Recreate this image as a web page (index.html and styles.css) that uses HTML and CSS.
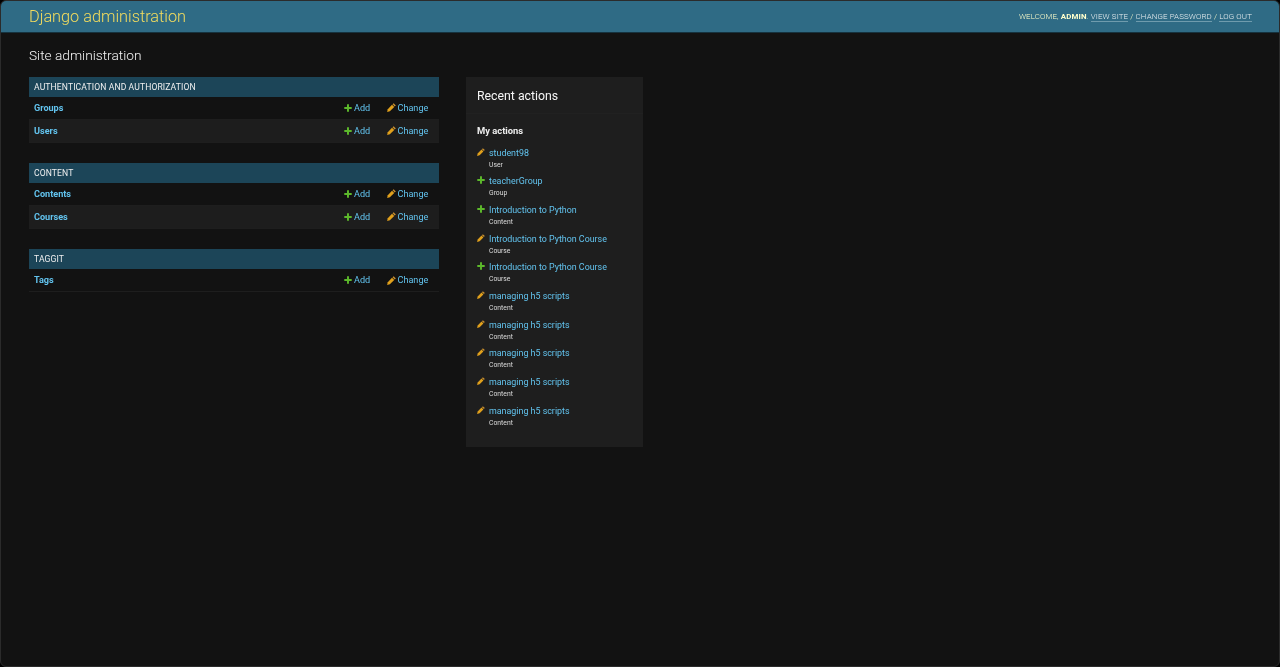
FILE: index.html
```html
<!DOCTYPE html>
<html lang="en">
<head>
<meta charset="utf-8">
<title>Site administration | Django site admin</title>
<link rel="stylesheet" href="styles.css">
</head>
<body>
<svg class="defs" width="0" height="0" aria-hidden="true">
  <symbol id="plus" viewBox="0 0 14 14"><path d="M5.300 0.500h3.400v4.800h4.800v3.400H8.700v4.800H5.300V8.700H0.500V5.300h4.800z" fill="#5cb82b"/></symbol>
  <symbol id="pencil" viewBox="0 0 14 14"><path d="M10.300 0.300l3.400 3.400-1.700 1.700-3.400-3.400z" fill="#c98f2e"/><path d="M7.800 2.800l3.400 3.400-6.700 6.700-4.300 1 1-4.300z" fill="#e0a01c"/></symbol>
</svg>
<div class="frame">
  <header class="topbar">
    <a class="brand" href="#">Django administration</a>
    <div class="tools">Welcome, <strong>admin</strong>. <a href="#">View site</a> / <a href="#">Change password</a> / <a href="#">Log out</a></div>
  </header>
  <main class="content">
    <h1 class="title">Site administration</h1>
    <div class="columns">
      <div class="apps">
        <section class="module">
          <h2 class="caption">Authentication and Authorization</h2>
          <div class="row"><a class="name" href="#">Groups</a><a class="act add" href="#"><svg class="ic"><use href="#plus"/></svg>Add</a><a class="act" href="#"><svg class="ic"><use href="#pencil"/></svg>Change</a></div>
          <div class="row alt"><a class="name" href="#">Users</a><a class="act add" href="#"><svg class="ic"><use href="#plus"/></svg>Add</a><a class="act" href="#"><svg class="ic"><use href="#pencil"/></svg>Change</a></div>
        </section>
        <section class="module">
          <h2 class="caption">Content</h2>
          <div class="row"><a class="name" href="#">Contents</a><a class="act add" href="#"><svg class="ic"><use href="#plus"/></svg>Add</a><a class="act" href="#"><svg class="ic"><use href="#pencil"/></svg>Change</a></div>
          <div class="row alt"><a class="name" href="#">Courses</a><a class="act add" href="#"><svg class="ic"><use href="#plus"/></svg>Add</a><a class="act" href="#"><svg class="ic"><use href="#pencil"/></svg>Change</a></div>
        </section>
        <section class="module">
          <h2 class="caption">Taggit</h2>
          <div class="row"><a class="name" href="#">Tags</a><a class="act add" href="#"><svg class="ic"><use href="#plus"/></svg>Add</a><a class="act" href="#"><svg class="ic"><use href="#pencil"/></svg>Change</a></div>
        </section>
      </div>
      <aside class="recent">
        <h2 class="recent-title">Recent actions</h2>
        <h3 class="mine">My actions</h3>
        <ul class="log">
          <li class="entry"><svg class="ic"><use href="#pencil"/></svg><div><a href="#">student98</a><span class="type">User</span></div></li>
          <li class="entry"><svg class="ic"><use href="#plus"/></svg><div><a href="#">teacherGroup</a><span class="type">Group</span></div></li>
          <li class="entry"><svg class="ic"><use href="#plus"/></svg><div><a href="#">Introduction to Python</a><span class="type">Content</span></div></li>
          <li class="entry"><svg class="ic"><use href="#pencil"/></svg><div><a href="#">Introduction to Python Course</a><span class="type">Course</span></div></li>
          <li class="entry"><svg class="ic"><use href="#plus"/></svg><div><a href="#">Introduction to Python Course</a><span class="type">Course</span></div></li>
          <li class="entry"><svg class="ic"><use href="#pencil"/></svg><div><a href="#">managing h5 scripts</a><span class="type">Content</span></div></li>
          <li class="entry"><svg class="ic"><use href="#pencil"/></svg><div><a href="#">managing h5 scripts</a><span class="type">Content</span></div></li>
          <li class="entry"><svg class="ic"><use href="#pencil"/></svg><div><a href="#">managing h5 scripts</a><span class="type">Content</span></div></li>
          <li class="entry"><svg class="ic"><use href="#pencil"/></svg><div><a href="#">managing h5 scripts</a><span class="type">Content</span></div></li>
          <li class="entry"><svg class="ic"><use href="#pencil"/></svg><div><a href="#">managing h5 scripts</a><span class="type">Content</span></div></li>
        </ul>
      </aside>
    </div>
  </main>
</div>
</body>
</html>
```

FILE: styles.css
```css
* { box-sizing: border-box; }
html, body { margin: 0; height: 100%; background: #000; }
body { font-family: Roboto, "Liberation Sans", sans-serif; color: #eee; overflow: hidden; }
a { text-decoration: none; color: #62c3ee; }
.defs { position: absolute; }
.frame { height: 667px; background: #121212; border: 1px solid #2b2b2b; border-radius: 6px; overflow: hidden; will-change: transform; }
.topbar { height: 32px; background: #2f6b85; display: flex; align-items: center; justify-content: space-between; padding: 0 27px 0 28px; border-bottom: 1px solid #16323e; }
.brand { font-size: 16.300px; font-weight: 300; color: #f5dd5d; }
.tools { font-size: 7.900px; font-weight: 300; letter-spacing: .13px; text-transform: uppercase; color: #ffc; }
.tools strong { font-weight: 700; }
.tools a { color: #e8eef0; border-bottom: 1px solid #6f9bad; }
.content { padding: 13px 28px 0; }
.title { margin: 0 0 13px; font-size: 13.700px; line-height: 18px; font-weight: 300; color: #f5f5f5; }
.columns { display: flex; align-items: flex-start; gap: 27px; }
.apps { width: 410px; display: flex; flex-direction: column; gap: 20.500px; }
.caption { margin: 0; height: 20px; padding: 0 5px; display: flex; align-items: center; background: #1c4558; font-size: 8.600px; font-weight: 400; letter-spacing: .11px; text-transform: uppercase; color: #f0f0f0; }
.row { height: 22.800px; display: flex; align-items: center; padding: 0 11px 0 5px; font-size: 9.100px; border-bottom: 1px solid #1e1e1e; }
.row.alt { background: #1d1d1d; }
.name { font-weight: 700; margin-right: auto; }
.act { display: flex; align-items: center; width: 40.500px; }
.act.add { width: 42.500px; margin-right: .5px; }
.act .ic { margin-left: -.5px; }
.act:not(.add) .ic { width: 9px; height: 9px; margin-left: -1px; }
.ic { width: 8px; height: 8px; flex: none; margin-right: 2px; }
.recent { width: 177px; height: 370px; background: #1e1e1e; padding: 0 11px; }
.recent-title { margin: 0 -11px; padding: 11.500px 11px 0; height: 37px; font-size: 12.300px; line-height: 14px; font-weight: 400; color: #f5f5f5; border-bottom: 1px solid #212121; }
.mine { margin: 10.500px 0 12px; font-size: 9.400px; line-height: 11px; font-weight: 700; color: #eee; }
.log { margin: 0; padding: 0; list-style: none; }
.entry { height: 28.700px; display: flex; align-items: flex-start; font-size: 8.900px; line-height: 11px; }
.entry .ic { margin: 0 4px 0 0; }
.type { display: block; margin-top: 2px; font-size: 6.800px; line-height: 9px; color: #ddd; }
```
